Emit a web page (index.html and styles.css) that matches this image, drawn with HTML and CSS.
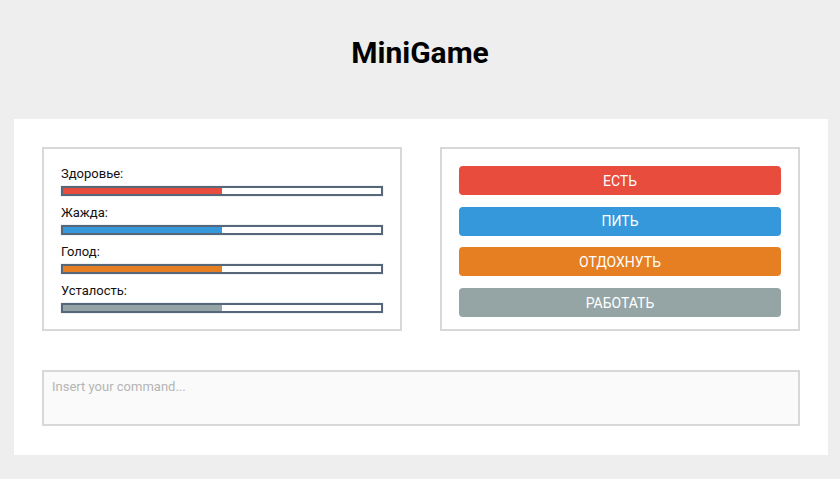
FILE: index.html
```html
<!DOCTYPE html>
<html lang="ru">
<head>
<meta charset="utf-8">
<title>MiniGame</title>
<link rel="stylesheet" href="styles.css">
</head>
<body>
<header class="header">
  <h1 class="title">MiniGame</h1>
</header>
<main class="panel">
  <div class="row">
    <section class="box stats">
      <div class="stat">
        <div class="stat-label">Здоровье:</div>
        <div class="bar"><div class="fill fill-red" style="width:50%"></div></div>
      </div>
      <div class="stat">
        <div class="stat-label">Жажда:</div>
        <div class="bar"><div class="fill fill-blue" style="width:50%"></div></div>
      </div>
      <div class="stat">
        <div class="stat-label">Голод:</div>
        <div class="bar"><div class="fill fill-orange" style="width:50%"></div></div>
      </div>
      <div class="stat">
        <div class="stat-label">Усталость:</div>
        <div class="bar"><div class="fill fill-gray" style="width:50%"></div></div>
      </div>
    </section>
    <section class="box actions">
      <button class="btn btn-red">ЕСТЬ</button>
      <button class="btn btn-blue">ПИТЬ</button>
      <button class="btn btn-orange">ОТДОХНУТЬ</button>
      <button class="btn btn-gray">РАБОТАТЬ</button>
    </section>
  </div>
  <textarea class="command" placeholder="Insert your command..."></textarea>
</main>
</body>
</html>
```
FILE: styles.css
```css
* { box-sizing: border-box; }
html, body { margin: 0; padding: 0; }
body {
  background: #eeeeee;
  font-family: Roboto, "Liberation Sans", Arial, sans-serif;
  color: #111;
}
.header {
  height: 119px;
  padding-top: 35px;
}
.title {
  margin: 0;
  text-align: center;
  font-size: 30px;
  line-height: 35px;
  font-weight: 700;
  color: #000;
}
.panel {
  width: 814px;
  margin-left: 14px;
  height: 336px;
  background: #ffffff;
  padding: 28px 28px 0 28px;
}
.row {
  display: flex;
  justify-content: space-between;
  width: 758px;
}
.box {
  width: 360px;
  height: 184px;
  border: 2px solid #d8d8d8;
  background: #fff;
  padding: 17px 17px 0 17px;
}
.stat { height: 39px; }
.stat-label {
  font-size: 13px;
  line-height: 15px;
  height: 15px;
  margin-bottom: 5px;
  color: #111;
}
.bar {
  height: 10px;
  border: 2px solid #56677a;
  background: #fff;
  box-shadow: 0 0 1px rgba(44,62,80,0.4);
}
.fill { height: 100%; }
.fill-red { background: #e74c3c; }
.fill-blue { background: #3498db; }
.fill-orange { background: #e67e22; }
.fill-gray { background: #95a5a6; }
.actions {
  display: flex;
  flex-direction: column;
  gap: 11.7px;
}
.btn {
  display: block;
  width: 100%;
  height: 29px;
  border: none;
  border-radius: 4px;
  color: #fff;
  font-family: Roboto, "Liberation Sans", Arial, sans-serif;
  font-size: 14px;
  font-weight: 400;
  padding: 0;
  cursor: pointer;
}
.btn-red { background: #e74c3c; }
.btn-blue { background: #3498db; }
.btn-orange { background: #e67e22; }
.btn-gray { background: #95a5a6; }
.command {
  display: block;
  margin-top: 39px;
  width: 758px;
  height: 56px;
  border: 2px solid #d8d8d8;
  background: #fafafa;
  resize: none;
  padding: 7px 8px;
  font-family: Roboto, "Liberation Sans", Arial, sans-serif;
  font-size: 13px;
  line-height: 15px;
  outline: none;
}
.command::placeholder { color: #b5b5b5; }
```
